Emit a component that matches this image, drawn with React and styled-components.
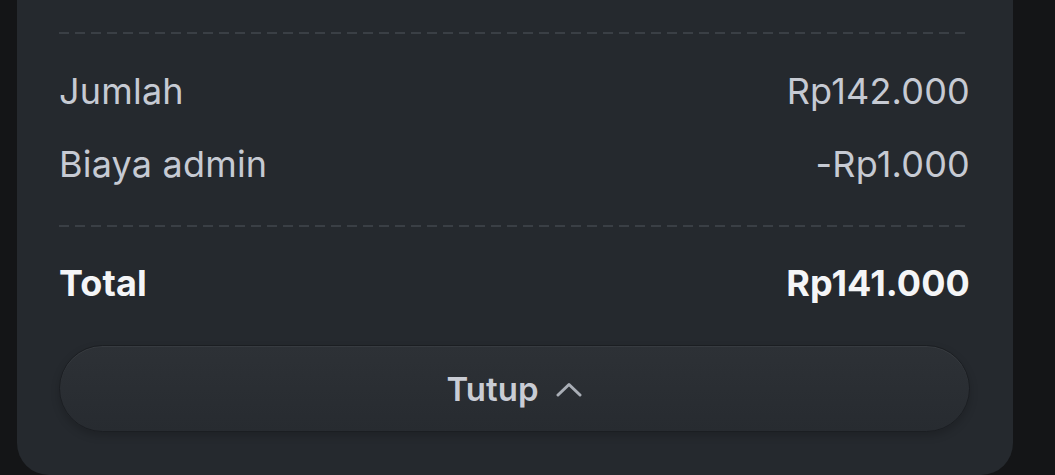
import styled, { createGlobalStyle } from 'styled-components';

const GlobalStyle = createGlobalStyle`
  html, body {
    margin: 0;
    padding: 0;
    background: #141517;
  }
  body {
    font-family: Inter, "Noto Sans", sans-serif;
    -webkit-font-smoothing: antialiased;
  }
`;

const Page = styled.div`
  width: 1055px;
  height: 475px;
  overflow: hidden;
  padding-left: 17px;
  box-sizing: border-box;
`;

const Sheet = styled.div`
  width: 996px;
  height: 475px;
  box-sizing: border-box;
  background: #25292e;
  border-radius: 0 0 32px 32px;
  padding: 32px 43px 0 42px;
  display: flex;
  flex-direction: column;
`;

const Divider = styled.div`
  height: 2px;
  margin-top: ${p => p.$top || 0}px;
  background-image: linear-gradient(to right, #3a3f45 0 10px, transparent 10px 16px);
  background-size: 16px 2px;
  background-repeat: repeat-x;
`;

const Rows = styled.div`
  padding-top: 20px;
  display: flex;
  flex-direction: column;
`;

const Row = styled.div`
  height: ${p => p.$h || 73}px;
  display: flex;
  align-items: center;
  justify-content: space-between;
  font-size: 36px;
  font-weight: ${p => (p.$bold ? 700 : 400)};
  letter-spacing: ${p => (p.$bold ? '0.1px' : '0.2px')};
  color: ${p => (p.$bold ? '#f4f5f7' : '#c6cad3')};
`;

const TotalRow = styled(Row)`
  margin-top: 31px;
`;

const CloseButton = styled.button`
  margin-top: 37px;
  height: 87px;
  width: 100%;
  border-radius: 44px;
  border: 1px solid #1b1e22;
  background: linear-gradient(#2d3136, #272b30);
  box-shadow: inset 0 1px 0 rgba(255, 255, 255, 0.05), 0 4px 8px rgba(0, 0, 0, 0.18);
  display: flex;
  align-items: center;
  justify-content: center;
  gap: 16px;
  padding: 0;
  font-family: Inter, "Noto Sans", sans-serif;
  font-size: 33px;
  font-weight: 600;
  color: #c9ccd4;
  cursor: pointer;
`;

const Chevron = () => (
  <svg width="28" height="16" viewBox="0 0 28 16" fill="none">
    <path d="M3 14 L14 3.5 L25 14" stroke="#a9aeb6" strokeWidth="3" strokeLinecap="round" strokeLinejoin="round" />
  </svg>
);

export default function App() {
  return (
    <Page>
      <GlobalStyle />
      <Sheet>
        <Divider />
        <Rows>
          <Row><span>Jumlah</span><span>Rp142.000</span></Row>
          <Row><span>Biaya admin</span><span>-Rp1.000</span></Row>
        </Rows>
        <Divider $top={25} />
        <TotalRow $bold $h={50}><span>Total</span><span>Rp141.000</span></TotalRow>
        <CloseButton>Tutup <Chevron /></CloseButton>
      </Sheet>
    </Page>
  );
}
